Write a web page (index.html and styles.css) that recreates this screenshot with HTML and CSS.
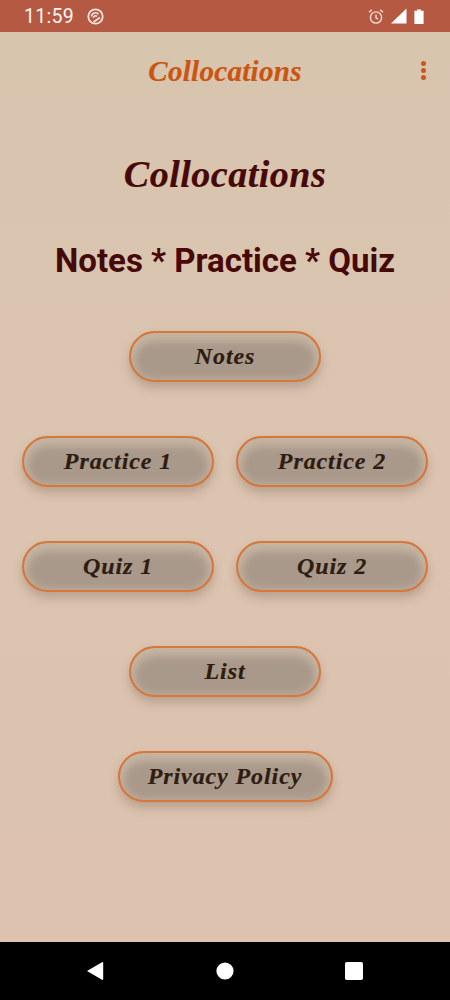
FILE: index.html
```html
<!DOCTYPE html>
<html lang="en">
<head>
<meta charset="utf-8">
<title>Collocations</title>
<link rel="stylesheet" href="styles.css">
</head>
<body>
<div class="phone">
  <header class="status">
    <div class="status-left">
      <span class="clock">11:59</span>
      <svg class="ic-sync" width="17" height="17" viewBox="0 0 17 17" fill="none" stroke="#fff" stroke-opacity=".85">
        <circle cx="8.500" cy="8.500" r="7.200" stroke-width="1.800"/>
        <path d="M4.500 8.500a4 4 0 0 1 7-2.400M6.300 9.800a2.300 2.300 0 0 1 3.800-1.500M6.500 14 13 9.500" stroke-width="1.600"/>
      </svg>
    </div>
    <div class="status-right">
      <svg width="16" height="17" viewBox="0 0 16 17" fill="none" stroke="#fff" stroke-opacity=".8" stroke-width="1.400">
        <circle cx="8" cy="9.500" r="5.600"/>
        <path d="M8 6.500v3.400l2 1.200M1 4.200 3.800 1.800M15 4.200 12.200 1.800"/>
      </svg>
      <svg width="16" height="16" viewBox="0 0 16 16"><path d="M0 15.500 15.500 0.500V15.500Z" fill="#fff"/></svg>
      <svg width="10" height="15" viewBox="0 0 10 15"><path d="M3 0.500H7V1.800H9.600V15H0.400V1.800H3Z" fill="#fff"/></svg>
    </div>
  </header>
  <main class="app">
    <div class="appbar">
      <span class="appbar-title">Collocations</span>
      <span class="menu"><i></i><i></i><i></i></span>
    </div>
    <h1 class="title">Collocations</h1>
    <h2 class="subtitle">Notes * Practice * Quiz</h2>
    <div class="rows">
      <div class="row"><button class="btn">Notes</button></div>
      <div class="row"><button class="btn">Practice 1</button><button class="btn">Practice 2</button></div>
      <div class="row"><button class="btn">Quiz 1</button><button class="btn">Quiz 2</button></div>
      <div class="row"><button class="btn">List</button></div>
      <div class="row"><button class="btn btn-wide">Privacy Policy</button></div>
    </div>
  </main>
  <footer class="nav">
    <svg width="18" height="20" viewBox="0 0 18 20"><path d="M1 10 16 1.200Q17.200 .8 17.200 2V18Q17.200 19.200 16 18.800L1 10Z" fill="#fff"/></svg>
    <svg width="18" height="18" viewBox="0 0 18 18"><circle cx="9" cy="9" r="8.600" fill="#fff"/></svg>
    <svg width="18" height="18" viewBox="0 0 18 18"><rect width="18" height="18" rx="1.800" fill="#fff"/></svg>
  </footer>
</div>
</body>
</html>
```
FILE: styles.css
```css
* { box-sizing: border-box; }
html, body { margin: 0; padding: 0; }
body { width: 450px; height: 1000px; overflow: hidden; font-family: "Liberation Serif", serif; }
.phone { width: 450px; height: 1000px; display: flex; flex-direction: column; }
.status { height: 32px; background: #b65943; display: flex; justify-content: space-between; align-items: center; padding: 0 26px 0 24px; color: #fff; }
.status-left { display: flex; align-items: center; gap: 13px; }
.clock { font: 400 19.500px "Roboto", sans-serif; letter-spacing: .3px; opacity: .95; }
.status-right { display: flex; align-items: center; gap: 7px; }
.app { flex: 1; background: linear-gradient(180deg, #d8c5ae 0%, #dbc4b0 50%, #dcc2af 100%); display: flex; flex-direction: column; align-items: center; }
.appbar { width: 100%; height: 78px; position: relative; display: flex; align-items: center; justify-content: center; }
.appbar-title { font: italic 700 29px "Liberation Serif", serif; color: #cb5510; letter-spacing: .3px; -webkit-text-stroke: .2px #cb5510; }
.menu { position: absolute; right: 24px; top: 29px; display: flex; flex-direction: column; gap: 2px; }
.menu i { display: block; width: 5px; height: 5px; border-radius: 50%; background: #c9581a; }
.title { margin: 38px 0 0; font: italic 700 38px/52px "Liberation Serif", serif; color: #470808; letter-spacing: .5px; -webkit-text-stroke: .2px #470808; }
.subtitle { margin: 39px 0 0; font: 700 33px/44px "Roboto", sans-serif; color: #470808; }
.rows { display: flex; flex-direction: column; gap: 54px; margin-top: 48px; width: 100%; align-items: center; }
.row { display: flex; gap: 22px; justify-content: center; }
.btn { width: 192px; height: 51px; border: 2px solid #d8773c; border-radius: 26px; background: #a9998b; box-shadow: inset 0 6px 10px 2px #c6b5a2, inset 0 0 8px 2px #b8a796, 0 6px 10px rgba(110, 85, 65, .3); font: italic 700 24px "Liberation Serif", serif; color: #2e1c10; letter-spacing: .9px; padding: 0; -webkit-text-stroke: .2px #2e1c10; }
.btn-wide { width: 215px; }
.nav { height: 58px; background: #000; display: flex; align-items: center; justify-content: space-between; padding: 0 87px 0 86px; }
```
